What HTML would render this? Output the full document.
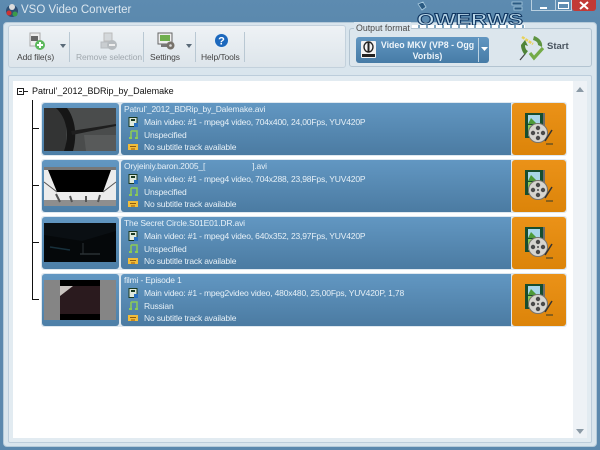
<!DOCTYPE html>
<html><head><meta charset="utf-8">
<style>
*{box-sizing:border-box}
html,body{margin:0;padding:0;width:600px;height:450px;overflow:hidden}
body{position:relative;font-family:"Liberation Sans","DejaVu Sans",sans-serif;background:linear-gradient(#5d8bb0,#5a88ad 30px,#5b88ad);}
.a{position:absolute}
.row{position:absolute;left:41px;width:526px;height:54px;background:#dfe8ef;border-radius:3px}
.th{position:absolute;left:1px;top:1px;width:77px;height:52px;border-radius:3px;background:linear-gradient(#6297c2,#4d7fa7);overflow:hidden}
.inf{position:absolute;left:80px;top:1px;width:390px;height:52px;border-radius:3px 0 0 3px;background:linear-gradient(#6297c2,#4b7ba2);color:#e6f0f7;font-size:8.500px;letter-spacing:-.17px;white-space:nowrap}
.inf div{position:absolute;white-space:nowrap}
.or{position:absolute;left:471px;top:1px;width:54px;height:52px;border-radius:3px;background:linear-gradient(#eb9218,#dc8409)}
.tl{position:absolute;font-size:8.500px;letter-spacing:-.1px;color:#444;white-space:nowrap}
.sep{position:absolute;top:32px;width:1px;height:30px;background:#b9c8d3}
</style></head><body>
<svg width="0" height="0" style="position:absolute">
<symbol id="reel" viewBox="0 0 54 52"><rect x="13" y="10" width="18" height="25" fill="#174d2e"/><rect x="16" y="12" width="12" height="9" fill="#a8d6e8"/><path d="M16 21L19 15L25 21Z" fill="#4d9a38"/><rect x="16" y="22" width="12" height="11" fill="#8fcc5c"/><rect x="31" y="10" width="2" height="14" fill="#6d6d6d"/><circle cx="26" cy="30" r="9.500" fill="#d6d4cf" stroke="#77746e"/><circle cx="26" cy="25" r="2.200" fill="#4a4a4a"/><circle cx="26" cy="35" r="2.200" fill="#4a4a4a"/><circle cx="21" cy="30" r="2.200" fill="#4a4a4a"/><circle cx="31" cy="30" r="2.200" fill="#4a4a4a"/><circle cx="26" cy="30" r="1" fill="#4a4a4a"/><path d="M33 38L40 27" stroke="#333" stroke-width="1.500"/><path d="M34 41H41" stroke="#6b5220" stroke-width="1.500"/></symbol>
<symbol id="iv" viewBox="0 0 10 10"><rect x="1" y="0.500" width="8" height="9" fill="#dfe9dd" stroke="#1a3a22"/><rect x="3" y="2" width="4" height="2" fill="#1a3a22"/><rect x="6" y="6" width="4" height="4" fill="#2870c0"/></symbol>
<symbol id="ia" viewBox="0 0 10 10"><path d="M3 1H9V8M3 1V8" fill="none" stroke="#8ccb55" stroke-width="1.500"/><rect x="1" y="7" width="3" height="2" fill="#8ccb55"/><rect x="7" y="7" width="3" height="2" fill="#8ccb55"/></symbol>
<symbol id="is" viewBox="0 0 10 9"><rect x="0" y="1" width="10" height="6" fill="#f2bd3a"/><rect x="2" y="3" width="6" height="1" fill="#8a5a12"/><rect x="3" y="5" width="4" height="2" fill="#c98a1e"/></symbol>
</svg>
<svg class="a" style="left:5px;top:3px" width="15" height="15" viewBox="0 0 15 15"><circle cx="7" cy="8" r="6" fill="#2e4f74"/><circle cx="4" cy="10" r="2.500" fill="#c33"/><circle cx="10" cy="11" r="2.500" fill="#3a9a4a"/><circle cx="7" cy="4" r="3" fill="#ddd"/></svg>
<div class="a" style="left:21px;top:4px;font-size:11.500px;color:#dbe7f0;white-space:nowrap">VSO Video Converter</div>

<div class="a" style="left:531px;top:0;width:25px;height:11px;border:1px solid #b9d0e0;border-top:0;background:#5f8db2"></div>
<div class="a" style="left:540px;top:7px;width:7px;height:2px;background:#fff"></div>
<div class="a" style="left:555px;top:0;width:17px;height:11px;border:1px solid #b9d0e0;border-top:0;background:#5f8db2"></div>
<div class="a" style="left:558px;top:2px;width:11px;height:7px;border:1px solid #fff;border-top-width:2px"></div>
<div class="a" style="left:572px;top:0;width:24px;height:11px;background:#c23a36;border-radius:0 0 3px 3px"></div>
<svg class="a" style="left:578px;top:1px" width="12" height="9" viewBox="0 0 12 9"><path d="M2 1L10 8M10 1L2 8" stroke="#fff" stroke-width="2"/></svg>

<!-- client -->
<div class="a" style="left:3px;top:22px;width:594px;height:425px;background:#d9e5ed;border-radius:4px;border:1px solid #b5cad9"></div>
<!-- toolbar -->
<div class="a" style="left:8px;top:25px;width:338px;height:43px;background:linear-gradient(#eef2f5,#dde5eb);border:1px solid #c3d1dc;border-radius:3px"></div>
<svg class="a" style="left:28px;top:32px" width="18" height="19" viewBox="0 0 18 19"><path d="M2 1H12V14H2Z" fill="#eee" stroke="#aaa"/><rect x="3" y="4" width="7" height="5" fill="#666"/><circle cx="12" cy="13" r="5" fill="#5cb85c"/><path d="M12 10V16M9 13H15" stroke="#fff" stroke-width="2"/></svg>
<div class="tl" style="left:17px;top:52px">Add file(s)</div>
<svg class="a" style="left:60px;top:44px" width="6" height="4"><path d="M0 0H6L3 4Z" fill="#5a6a78"/></svg>
<div class="sep" style="left:69px"></div>
<svg class="a" style="left:100px;top:32px" width="18" height="19" viewBox="0 0 18 19"><path d="M4 1H12V9H4Z" fill="#d4d8db" stroke="#bbb"/><path d="M1 10H10V16H1Z" fill="#c9cdd0" stroke="#b8bcc0"/><circle cx="12" cy="13" r="5" fill="#b6bbbf"/><path d="M9 13H15" stroke="#eee" stroke-width="2"/></svg>
<div class="tl" style="left:76px;top:52px;color:#a0a8ae">Remove selection</div>
<div class="sep" style="left:143px"></div>
<svg class="a" style="left:157px;top:32px" width="19" height="19" viewBox="0 0 19 19"><rect x="1" y="1" width="14" height="11" fill="#eee" stroke="#666"/><rect x="3" y="3" width="10" height="6" fill="#6fae4e"/><rect x="4" y="12" width="9" height="3" fill="#777"/><circle cx="13.500" cy="13.500" r="4" fill="#77716a"/><circle cx="13.500" cy="13.500" r="1.300" fill="#ddd"/></svg>
<div class="tl" style="left:150px;top:52px">Settings</div>
<svg class="a" style="left:186px;top:44px" width="6" height="4"><path d="M0 0H6L3 4Z" fill="#5a6a78"/></svg>
<div class="sep" style="left:195px"></div>
<svg class="a" style="left:213px;top:32px" width="17" height="17" viewBox="0 0 17 17"><circle cx="8.500" cy="8.500" r="8" fill="#e6eef4"/><circle cx="8.500" cy="8.500" r="6.500" fill="#1c68bd"/><text x="8.500" y="12.500" font-size="11" font-weight="bold" text-anchor="middle" fill="#fff" font-family="Liberation Sans">?</text></svg>
<div class="tl" style="left:201px;top:52px">Help/Tools</div>
<div class="sep" style="left:244px"></div>

<!-- output format -->
<div class="a" style="left:349px;top:28px;width:243px;height:39px;background:#dce6ed;border:1px solid #b3c4d1;border-radius:3px"></div>
<div class="a" style="left:354px;top:22px;padding:0 1px 0 2px;background:#dbe6ee;font-size:8.800px;line-height:12px;color:#4a4a4a;white-space:nowrap">Output format</div>
<div class="a" style="left:356px;top:37px;width:133px;height:26px;background:linear-gradient(#6297c2,#467ba6);border-radius:3px"></div>
<div class="a" style="left:478px;top:38px;width:1px;height:24px;background:#bcd2e2"></div>
<svg class="a" style="left:481px;top:47px" width="7" height="4"><path d="M0 0H7L3.500 4Z" fill="#fff"/></svg>
<svg class="a" style="left:360px;top:40px" width="17" height="19" viewBox="0 0 17 19"><rect x="1" y="1" width="15" height="17" rx="1" fill="#f3f3f3"/><ellipse cx="8.500" cy="7" rx="4.500" ry="5" fill="none" stroke="#222" stroke-width="1.400"/><path d="M8.500 2V12" stroke="#222" stroke-width="2"/><rect x="2" y="14" width="13" height="3" fill="#222"/></svg>
<div class="a" style="left:378px;top:40px;width:99px;text-align:center;color:#eef5fa;font-size:8.800px;font-weight:bold;line-height:10.500px">Video MKV (VP8 - Ogg Vorbis)</div>
<svg class="a" style="left:517px;top:32px" width="29" height="29" viewBox="0 0 29 29"><path d="M5 5L16 12" stroke="#e8d25a" stroke-width="2.500" stroke-dasharray="3 1"/><path d="M8 22L3 28" stroke="#444" stroke-width="1.200"/><path d="M17 4C23 6 26 11 25 15L21 13C21 10 19 9 16 8Z" fill="#5e9440"/><path d="M4 13C4 17 6 21 8 23L11 19C9 18 8 16 8 13L11 14L8 8Z" fill="#4f8438"/><path d="M13 21L17 26L26 16" fill="none" stroke="#74ab48" stroke-width="3.200"/></svg>
<div class="a" style="left:547px;top:41px;font-size:9.500px;font-weight:bold;color:#4a5560">Start</div>

<!-- watermark -->
<svg class="a" style="left:414px;top:0" width="112" height="28" viewBox="0 0 112 28"><path d="M4 4L9 2L12 7L8 10ZM98 2H108V5H98ZM100 7H108V10H100Z" fill="#2a5a82" stroke="#a9cbe0" stroke-width=".8"/><text x="3" y="25" font-family="Liberation Sans" font-size="17" font-weight="bold" textLength="106" lengthAdjust="spacingAndGlyphs" fill="#b9d6e8" stroke="#0f3560" stroke-width=".9">OWERWS</text></svg>
<div class="a" style="left:412px;top:25px;width:113px;height:3px;background:repeating-linear-gradient(90deg,#fff 0 6px,#7fa5c0 6px 8px)"></div>

<!-- list panel -->
<div class="a" style="left:8px;top:75px;width:584px;height:368px;background:#e2ebf1;border:1px solid #bccddb;border-radius:2px"></div>
<div class="a" style="left:13px;top:81px;width:560px;height:357px;background:#fff"></div>
<div class="a" style="left:573px;top:81px;width:14px;height:357px;background:#eef2f6"></div>
<svg class="a" style="left:576px;top:87px" width="8" height="5"><path d="M0 5H8L4 0Z" fill="#8b9aa6"/></svg>
<svg class="a" style="left:576px;top:429px" width="8" height="5"><path d="M0 0H8L4 5Z" fill="#8b9aa6"/></svg>

<!-- tree -->
<div class="a" style="left:17px;top:88px;width:7px;height:7px;border:1px solid #222"></div>
<div class="a" style="left:19px;top:91px;width:3px;height:1px;background:#222"></div>
<div class="a" style="left:24px;top:91px;width:4px;height:1px;background:#222"></div>
<div class="a" style="left:32px;top:86px;font-size:9px;color:#111;white-space:nowrap">Patrul’_2012_BDRip_by_Dalemake</div>
<div class="a" style="left:32px;top:100px;width:1px;height:199px;background:#111"></div>
<div class="a" style="left:32px;top:128px;width:7px;height:1px;background:#111"></div>
<div class="a" style="left:32px;top:185px;width:7px;height:1px;background:#111"></div>
<div class="a" style="left:32px;top:242px;width:7px;height:1px;background:#111"></div>
<div class="a" style="left:32px;top:299px;width:7px;height:1px;background:#111"></div>

<!-- row 1 -->
<div class="row" style="top:102px">
 <div class="th"><svg width="77" height="52"><rect x="2" y="5" width="72" height="43" fill="#4a4c4c"/><rect x="2" y="5" width="22" height="43" fill="#333434"/><path d="M14 5C26 16 27 34 22 48H31C36 30 32 14 25 5Z" fill="#161616"/><path d="M29 28L74 21V23L30 32Z" fill="#1e1e1e"/><path d="M42 32H74V48H44Z" fill="#585a5a"/></svg></div>
 <div class="inf"><div style="left:3px;top:1px">Patrul’_2012_BDRip_by_Dalemake.avi</div>
  <svg class="a" style="left:7px;top:14px" width="10" height="10"><use href="#iv"/></svg>
  <div style="left:23px;top:14px">Main video: #1 - mpeg4 video, 704x400, 24,00Fps, YUV420P</div>
  <svg class="a" style="left:7px;top:27px" width="10" height="10"><use href="#ia"/></svg>
  <div style="left:23px;top:27px">Unspecified</div>
  <svg class="a" style="left:7px;top:40px" width="10" height="9"><use href="#is"/></svg>
  <div style="left:23px;top:39px">No subtitle track available</div></div>
 <div class="or"><svg width="54" height="52"><use href="#reel"/></svg></div>
</div>
<!-- row 2 -->
<div class="row" style="top:159px">
 <div class="th"><svg width="77" height="52"><rect x="2" y="7" width="72" height="39" fill="#ececec"/><rect x="2" y="7" width="72" height="3" fill="#777"/><path d="M6 10H69L61 32H15Z" fill="#000"/><rect x="2" y="40" width="72" height="6" fill="#8e8e8e"/><path d="M2 22L15 32M74 22L61 32" stroke="#555"/><path d="M14 34L18 42M28 36L30 42M44 36L44 42M58 35L56 42" stroke="#555" stroke-width="2"/></svg></div>
 <div class="inf"><div style="left:3px;top:1px">Oryjeiniy.baron.2005_[<span style="display:inline-block;width:47px"></span>].avi</div>
  <svg class="a" style="left:7px;top:14px" width="10" height="10"><use href="#iv"/></svg>
  <div style="left:23px;top:14px">Main video: #1 - mpeg4 video, 704x288, 23,98Fps, YUV420P</div>
  <svg class="a" style="left:7px;top:27px" width="10" height="10"><use href="#ia"/></svg>
  <div style="left:23px;top:27px">Unspecified</div>
  <svg class="a" style="left:7px;top:40px" width="10" height="9"><use href="#is"/></svg>
  <div style="left:23px;top:39px">No subtitle track available</div></div>
 <div class="or"><svg width="54" height="52"><use href="#reel"/></svg></div>
</div>
<!-- row 3 -->
<div class="row" style="top:216px">
 <div class="th"><svg width="77" height="52"><rect x="2" y="6" width="72" height="39" fill="#05080a"/><path d="M2 18L40 24L74 14V6H2Z" fill="#0a0f13"/><path d="M8 30L28 33" stroke="#17303c" stroke-width="1.500"/><path d="M38 37H58" stroke="#3a4448"/><path d="M41 26V37" stroke="#2c3236"/></svg></div>
 <div class="inf"><div style="left:3px;top:1px">The Secret Circle.S01E01.DR.avi</div>
  <svg class="a" style="left:7px;top:14px" width="10" height="10"><use href="#iv"/></svg>
  <div style="left:23px;top:14px">Main video: #1 - mpeg4 video, 640x352, 23,97Fps, YUV420P</div>
  <svg class="a" style="left:7px;top:27px" width="10" height="10"><use href="#ia"/></svg>
  <div style="left:23px;top:27px">Unspecified</div>
  <svg class="a" style="left:7px;top:40px" width="10" height="9"><use href="#is"/></svg>
  <div style="left:23px;top:39px">No subtitle track available</div></div>
 <div class="or"><svg width="54" height="52"><use href="#reel"/></svg></div>
</div>
<!-- row 4 -->
<div class="row" style="top:273px">
 <div class="th"><svg width="77" height="52"><rect x="2" y="6" width="72" height="40" fill="#858585"/><rect x="18" y="6" width="40" height="40" fill="#000"/><rect x="18" y="12" width="40" height="28" fill="#2a1a1e"/><path d="M18 12H31L18 22Z" fill="#c9c4c0"/></svg></div>
 <div class="inf"><div style="left:3px;top:1px">filmi - Episode 1</div>
  <svg class="a" style="left:7px;top:14px" width="10" height="10"><use href="#iv"/></svg>
  <div style="left:23px;top:14px">Main video: #1 - mpeg2video video, 480x480, 25,00Fps, YUV420P, 1,78</div>
  <svg class="a" style="left:7px;top:27px" width="10" height="10"><use href="#ia"/></svg>
  <div style="left:23px;top:27px">Russian</div>
  <svg class="a" style="left:7px;top:40px" width="10" height="9"><use href="#is"/></svg>
  <div style="left:23px;top:39px">No subtitle track available</div></div>
 <div class="or"><svg width="54" height="52"><use href="#reel"/></svg></div>
</div>
</body></html>
